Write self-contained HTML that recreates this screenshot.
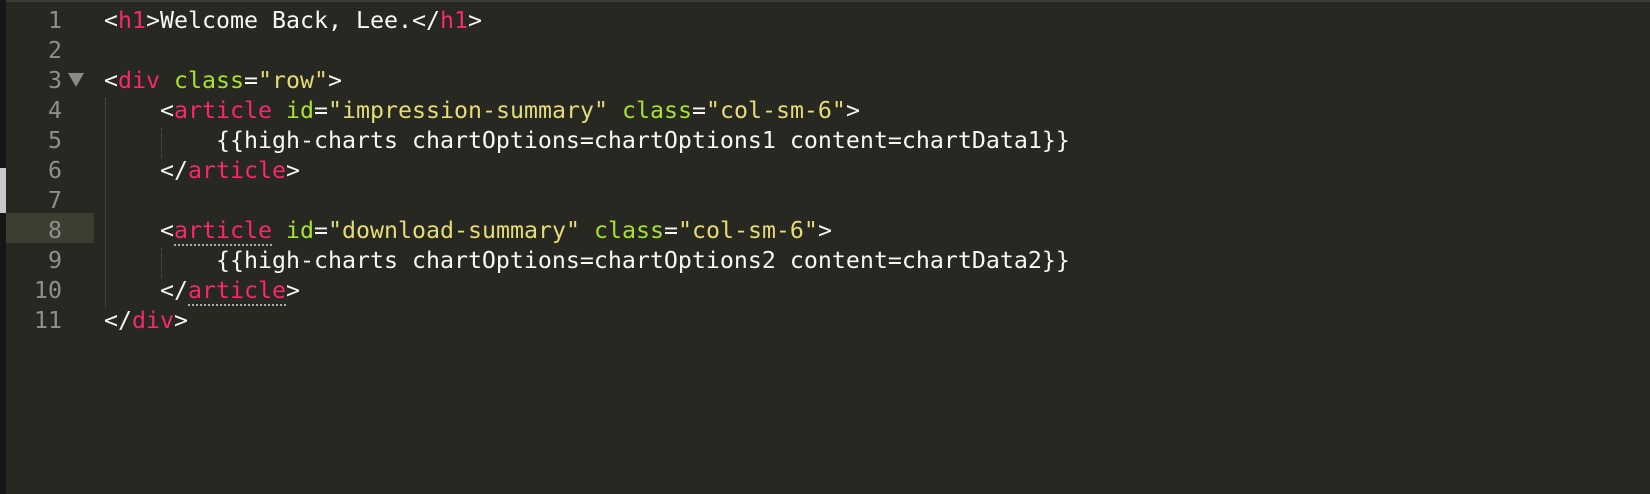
<!DOCTYPE html>
<html><head><meta charset="utf-8"><style>
html,body{margin:0;padding:0;width:1650px;height:494px;overflow:hidden;background:#272822;}
.top{position:absolute;left:0;top:0;width:1650px;height:2px;background:#3b3b37;}
.strip{position:absolute;left:0;top:0;width:6px;height:494px;background:#161616;}
.strip2{position:absolute;left:0;top:168px;width:6px;height:45px;background:#c9c9c9;}
.hl{position:absolute;left:6px;top:213px;width:88px;height:30px;background:#3e3d32;}
.gut{position:absolute;left:0;top:6px;width:62px;text-align:right;font:23.25px/30px "DejaVu Sans Mono",monospace;color:#8f908a;}
.code{position:absolute;left:104px;top:6px;font:23.25px/30px "DejaVu Sans Mono",monospace;color:#f8f8f2;white-space:pre;}
.t{color:#f92672}.a{color:#a6e22e}.s{color:#e6db74}
.u{border-bottom:2px dotted #aaa;}
.g{position:absolute;width:0;border-left:1px dotted #555;}
.arrow{position:absolute;left:68px;top:73px;width:0;height:0;border-left:8px solid transparent;border-right:8px solid transparent;border-top:14px solid #8a8a86;}
</style></head><body>
<div class="top"></div>
<div class="strip"></div><div class="strip2"></div>
<div class="hl"></div>
<div class="gut">1<br>2<br>3<br>4<br>5<br>6<br>7<br>8<br>9<br>10<br>11</div>
<div class="arrow"></div>
<div class="g" style="left:105px;top:98px;height:210px"></div>
<div class="g" style="left:161px;top:128px;height:30px"></div>
<div class="g" style="left:161px;top:248px;height:30px"></div>
<div class="code">&lt;<span class="t">h1</span>&gt;Welcome Back, Lee.&lt;/<span class="t">h1</span>&gt;

&lt;<span class="t">div</span> <span class="a">class</span>=<span class="s">"row"</span>&gt;
    &lt;<span class="t">article</span> <span class="a">id</span>=<span class="s">"impression-summary"</span> <span class="a">class</span>=<span class="s">"col-sm-6"</span>&gt;
        {{high-charts chartOptions=chartOptions1 content=chartData1}}
    &lt;/<span class="t">article</span>&gt;

    &lt;<span class="t u">article</span> <span class="a">id</span>=<span class="s">"download-summary"</span> <span class="a">class</span>=<span class="s">"col-sm-6"</span>&gt;
        {{high-charts chartOptions=chartOptions2 content=chartData2}}
    &lt;/<span class="t u">article</span>&gt;
&lt;/<span class="t">div</span>&gt;</div>
</body></html>
